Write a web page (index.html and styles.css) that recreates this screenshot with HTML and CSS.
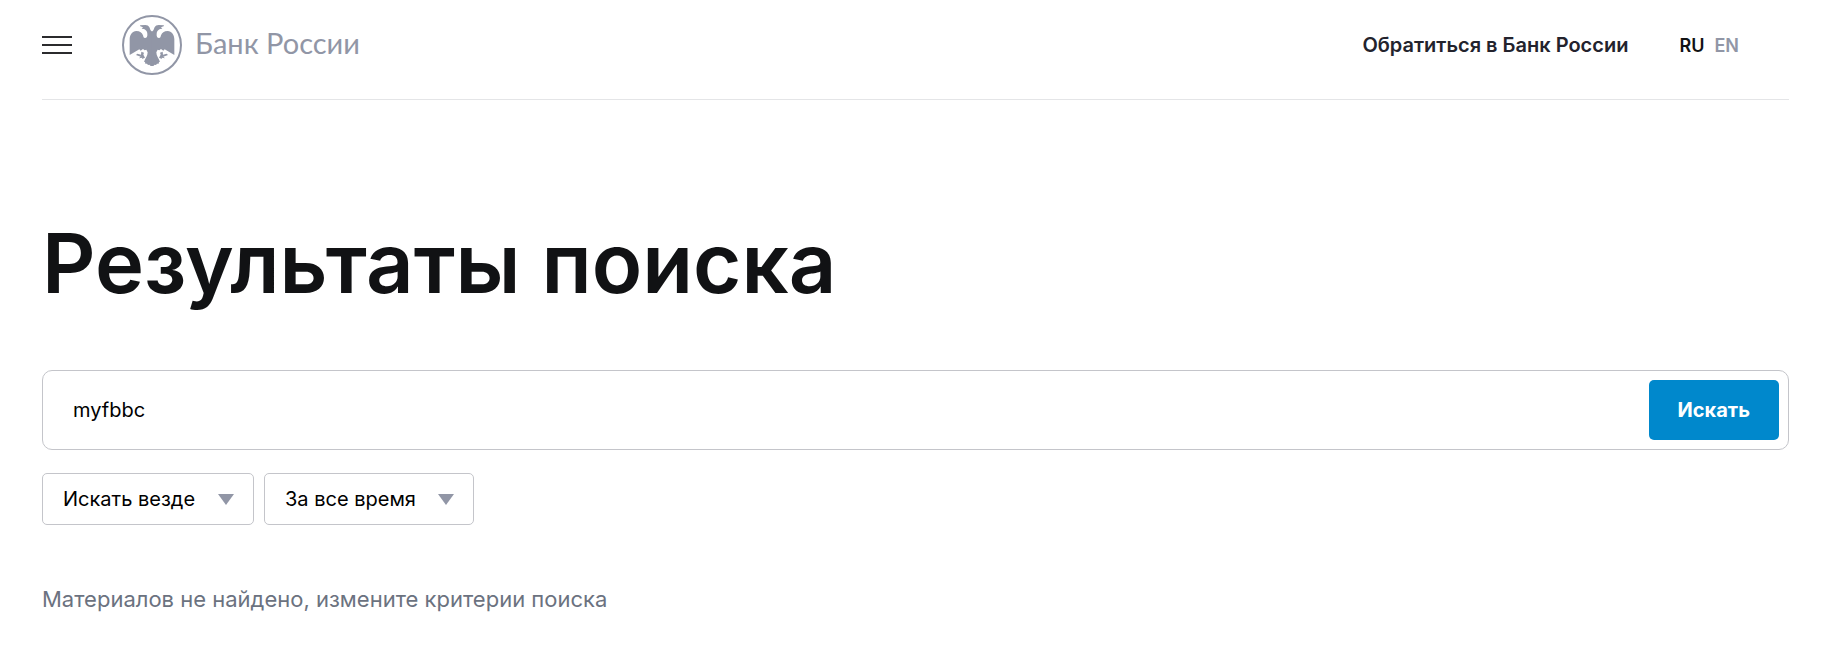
FILE: index.html
```
<!DOCTYPE html>
<html lang="ru">
  <head>
    <meta charset="UTF-8" />
    <meta name="viewport" content="width=device-width, initial-scale=1.0" />
    <title>Результаты поиска | Банк России</title>
    <link rel="stylesheet" href="styles.css">
  </head>
  <body>
    <div class="container">
      <header class="header">
        <button type="button" class="burger" aria-label="Меню">
          <span></span>
          <span></span>
          <span></span>
        </button>
        <a href="#" class="logo">
          <svg class="logo-icon" viewBox="0 0 180 180" aria-hidden="true">
            <circle cx="90" cy="90" r="87" fill="none" stroke="currentColor" stroke-width="6" />
            <g id="half" fill="currentColor">
              <path d="M91 50 L88 48 C86 46 84 42 83 38 C80 32 75 30 70 30 L54 31 L55 34 L63 37 L59 41 L66 42 C71 45 76 49 76 56 C77 64 74 69 69 69 C65 69 64 66 63 61 C60 53 54 48 43 48 C31 49 23 59 23 72 L23 120 L52 103 L56 107 L63 102 L68 106 L73 104 L77 112 C77 122 70 131 66 140 L69 141 L70 146 L75 146 L78 150 L82 149 L86 153 L91 153 Z" />
              <path d="M58 110 L66 113 L64 119 L69 128 L60 132 L61 128 L51 130 L56 125 L42 120 L46 116 L57 119 Z" />
            </g>
            <use href="#half" transform="translate(180 0) scale(-1 1)" />
          </svg>
          <span class="logo-text">Банк России</span>
        </a>
        <nav class="nav">
          <a href="#" class="contact">Обратиться в Банк России</a>
          <div class="lang">
            <a href="#" class="active">RU</a>
            <a href="#">EN</a>
          </div>
        </nav>
      </header>
      <main>
        <h1>Результаты поиска</h1>
        <form>
          <div class="search">
            <input type="text" name="text" value="myfbbc" aria-label="Поиск" />
            <button type="submit">Искать</button>
          </div>
          <div class="filters">
            <div class="filter">
              <select name="category" aria-label="Где искать">
                <option>Искать везде</option>
              </select>
            </div>
            <div class="filter">
              <select name="time" aria-label="Период">
                <option>За все время</option>
              </select>
            </div>
          </div>
        </form>
        <p class="message">Материалов не найдено, измените критерии поиска</p>
      </main>
    </div>
  </body>
</html>
```
FILE: styles.css
```
*{
    padding: 0;
    margin: 0;
    box-sizing: border-box;
}
body{
    font-family: Inter, "Noto Sans", sans-serif;
    font-size: 20px;
    color: #000;
    background-color: #fff;
}
a{
    color: inherit;
    text-decoration: none;
}
input, button, select{
    font: inherit;
    color: inherit;
    border: none;
    background: none;
}
.container{
    padding: 0 55px 0 42px;
}
.header{
    display: flex;
    align-items: center;
    height: 100px;
    padding-bottom: 9px;
    border-bottom: 1px solid #e4e5e7;
}
.burger{
    display: flex;
    flex-direction: column;
    gap: 6px;
    width: 30px;
    margin-right: 50px;
    cursor: pointer;
}
.burger span{
    height: 2px;
    background-color: #2b2b2d;
}
.logo{
    display: flex;
    align-items: center;
    gap: 13px;
    color: #9196a6;
}
.logo-icon{
    width: 60px;
    height: 60px;
}
.logo-text{
    font-family: Lato, sans-serif;
    font-size: 29px;
    line-height: 40px;
    padding-bottom: 4px;
}
.nav{
    display: flex;
    align-items: center;
    gap: 51px;
    margin-left: auto;
    padding-right: 50px;
    font-weight: 600;
    color: #23232d;
}
.contact{
    font-size: 20px;
}
.lang{
    display: flex;
    gap: 10px;
    font-size: 18px;
    color: #9196a6;
}
.lang .active{
    color: #111214;
}
h1{
    margin-top: 113px;
    font-size: 83px;
    font-weight: 600;
    line-height: 100px;
    color: #111214;
}
.search{
    display: flex;
    height: 80px;
    margin-top: 57px;
    padding: 9px;
    border: 1px solid #c4c5ca;
    border-radius: 10px;
}
.search input{
    flex: 1;
    padding-left: 21px;
    outline: none;
}
.search button{
    padding: 0 29px;
    border-radius: 5px;
    font-weight: 700;
    color: #fff;
    background-color: #0088cc;
    cursor: pointer;
}
.filters{
    display: flex;
    gap: 10px;
    margin-top: 23px;
}
.filter{
    display: grid;
    align-items: center;
}
.filter select{
    grid-area: 1 / 1;
    height: 52px;
    padding: 0 57px 0 20px;
    border: 1px solid #c4c5ca;
    border-radius: 5px;
    appearance: none;
    cursor: pointer;
}
.filter::after{
    content: "";
    grid-area: 1 / 1;
    justify-self: end;
    margin-right: 20px;
    border-top: 11px solid #9196a6;
    border-left: 8px solid transparent;
    border-right: 8px solid transparent;
    pointer-events: none;
}
.message{
    margin: 59px 0;
    font-size: 22px;
    line-height: 30px;
    color: #6b7280;
}
```
